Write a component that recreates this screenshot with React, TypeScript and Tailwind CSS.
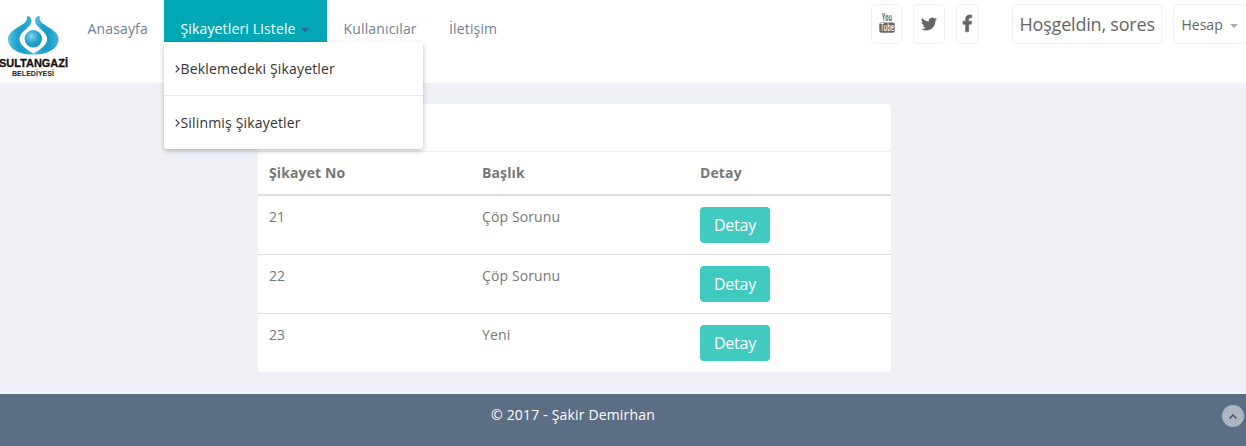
import React from "react";

const rows = [
  { no: 21, title: "Çöp Sorunu" },
  { no: 22, title: "Çöp Sorunu" },
  { no: 23, title: "Yeni" },
];

function Logo() {
  return (
    <svg className="mt-[10px] block h-[70px] w-[72px] shrink-0" viewBox="0 0 72 70">
      <defs>
        <linearGradient id="wing" x1="0" x2="1" y1="0" y2="0">
          <stop offset="0" stopColor="#5fc4e3" />
          <stop offset="0.4" stopColor="#1a9fcb" />
          <stop offset="0.6" stopColor="#1a9fcb" />
          <stop offset="1" stopColor="#3fb4d9" />
        </linearGradient>
        <radialGradient id="orb" cx="0.4" cy="0.35" r="0.65">
          <stop offset="0" stopColor="#86d5ec" />
          <stop offset="0.6" stopColor="#25a5cf" />
          <stop offset="1" stopColor="#1291bf" />
        </radialGradient>
      </defs>
      <g fill="url(#wing)">
        <path d="M26.800 6.300C29.500 5.600 31.800 8 31.500 11.500C31 18 19.500 21 19.500 29C19.500 35 26.500 39.500 33.300 43.600V44.500C20 45 8 39 8 29C8 18 30 15.500 26.800 6.300Z" />
        <path d="M39.800 6.300C37.100 5.600 34.800 8 35.100 11.500C35.600 18 47.100 21 47.100 29C47.100 35 40.100 39.500 33.300 43.600V44.500C46.600 45 58.600 39 58.600 29C58.600 18 36.600 15.500 39.800 6.300Z" />
      </g>
      <circle cx="33.300" cy="28.800" r="8.700" fill="url(#orb)" />
      <text x="-1" y="56.500" textLength="69" lengthAdjust="spacingAndGlyphs" fill="#111" stroke="#111" strokeWidth="0.300" fontFamily="Liberation Sans, sans-serif" fontWeight="700" fontSize="11">SULTANGAZİ</text>
      <text x="12" y="65.500" textLength="42" lengthAdjust="spacingAndGlyphs" fill="#222" fontFamily="Liberation Sans, sans-serif" fontWeight="700" fontSize="7.500">BELEDİYESİ</text>
    </svg>
  );
}

function YoutubeIcon() {
  return (
    <svg className="-mt-[2px] h-[20px] w-[16px] overflow-visible" viewBox="0 0 16 20">
      <g transform="scale(0.52 1)" fontFamily="Open Sans, sans-serif" fontWeight="700" fontSize="10">
        <text x="5.800" y="8.300" fill="#666">You</text>
      </g>
      <rect x="0.300" y="9.400" width="15.400" height="10.400" rx="2" fill="#666" />
      <g transform="scale(0.56 1)" fontFamily="Open Sans, sans-serif" fontWeight="600" fontSize="10">
        <text x="2.600" y="18.300" fill="#fff">Tube</text>
      </g>
    </svg>
  );
}

function TwitterIcon() {
  return (
    <svg className="-mt-px h-[16px] w-[16px]" viewBox="0 0 24 24" fill="#666">
      <path d="M23.950 4.570a10 10 0 0 1-2.820.77 4.960 4.960 0 0 0 2.160-2.720c-.95.55-2 .95-3.130 1.180a4.920 4.920 0 0 0-8.380 4.480C7.690 8.090 4.070 6.130 1.640 3.160a4.920 4.920 0 0 0 1.520 6.570 4.900 4.900 0 0 1-2.230-.61v.06a4.920 4.920 0 0 0 3.950 4.830 5 5 0 0 1-2.210.08 4.940 4.940 0 0 0 4.600 3.420A9.870 9.870 0 0 1 0 19.540a13.990 13.990 0 0 0 7.550 2.210c9.050 0 14-7.500 14-13.980 0-.21 0-.42-.02-.63a9.940 9.940 0 0 0 2.420-2.570z" />
    </svg>
  );
}

function FacebookIcon() {
  return (
    <svg className="-mt-[2px] h-[17px] w-[9px] overflow-visible" viewBox="0 0 9 17" fill="#666" stroke="#666" strokeWidth="0.600">
      <path d="M8.800 0.150V2.800H7.200C6 2.800 5.700 3.400 5.700 4.300V6.200H8.700L8.300 9.200H5.700V16.800H2.600V9.200H0V6.200H2.600V4C2.600 1.400 4.200 0 6.500 0C7.600 0 8.500 0.080 8.800 0.150Z" />
    </svg>
  );
}

function Chevron() {
  return (
    <svg className="mr-[0.5px] h-[8px] w-[5px] shrink-0" viewBox="0 0 5 8" fill="none" stroke="#333" strokeWidth="1.100">
      <path d="M0.700 0.700L4 4L0.700 7.300" />
    </svg>
  );
}

function Caret({ className }: { className: string }) {
  return (
    <svg className={className} viewBox="0 0 8 4" fill="currentColor">
      <path d="M0 0H8L4 4Z" />
    </svg>
  );
}

const box = "flex h-[40px] items-center rounded border border-[#f0f1f7] text-[#666]";

export default function App() {
  return (
    <div className="flex h-[446px] w-[1246px] flex-col overflow-hidden bg-[#f0f1f7] font-['Open_Sans',sans-serif] text-[14px] leading-5 text-[#777]">
      <header className="flex h-[83px] shrink-0 items-start bg-white">
        <Logo />
        <nav className="-ml-px flex tracking-[0.15px] text-[#708096]">
          <a className="flex h-[42px] w-[93px] items-end pb-[3px] pl-[16.5px]">Anasayfa</a>
          <div className="relative">
            <a className="flex h-[42px] w-[163px] items-end bg-[#00a8b5] pb-[3px] pl-[16.5px] text-white">
              Şikayetleri Listele
              <Caret className="mb-[7px] ml-[5.5px] h-[4px] w-[8px] text-[#2f6398]" />
            </a>
            <div className="absolute top-[42px] left-0 z-10 w-[259px] rounded-b-[3px] bg-white tracking-[0.17px] text-[#333] shadow-[0_2px_5px_rgba(0,0,0,0.26)]">
              <a className="flex h-[54px] items-center border-b border-[#e7e7e7] pl-[11px]">
                <Chevron />
                Beklemedeki Şikayetler
              </a>
              <a className="flex h-[53px] items-center pt-px pl-[11px]">
                <Chevron />
                Silinmiş Şikayetler
              </a>
            </div>
          </div>
          <a className="flex h-[42px] w-[106px] items-end pb-[3px] pl-[16.5px]">Kullanıcılar</a>
          <a className="flex h-[42px] items-end pb-[3px] pl-[16px]">İletişim</a>
        </nav>
        <div className="mt-[4px] -mr-px ml-auto flex">
          <a className={`${box} w-[31px] justify-center`}><YoutubeIcon /></a>
          <a className={`${box} ml-[11px] w-[32px] justify-center`}><TwitterIcon /></a>
          <a className={`${box} ml-[11px] w-[23px] justify-center`}><FacebookIcon /></a>
          <div className={`${box} ml-[33px] w-[150px] pl-[6.5px] text-[18px] tracking-[-0.2px] whitespace-nowrap`}>Hoşgeldin, sores</div>
          <a className={`${box} ml-[11px] w-[74px] pt-px pl-[7.5px]`}>
            Hesap
            <Caret className="mt-[2px] ml-[7.5px] h-[4px] w-[8px] text-[#a7abc3]" />
          </a>
        </div>
      </header>

      <main className="mt-[21px] ml-[258px] w-[633px] shrink-0 overflow-hidden rounded-[4px] bg-white tracking-[0.12px]">
        <div className="h-[48px] border-b border-[#f0f1f7]" />
        <div className="grid h-[44px] grid-cols-[213px_218px_202px] border-b-2 border-[#ddd] pt-[11px] font-bold">
          <span className="pl-[11px]">Şikayet No</span>
          <span className="pl-[11px]">Başlık</span>
          <span className="pl-[11px]">Detay</span>
        </div>
        <div className="divide-y divide-[#ddd]">
          {rows.map((row) => (
            <div key={row.no} className="grid grid-cols-[213px_218px_202px] py-[11px]">
              <span className="pl-[11px]">{row.no}</span>
              <span className="pl-[11px]">{row.title}</span>
              <div className="pl-[11px]">
                <button className="block h-[36px] w-[70px] rounded-[4px] bg-[#41cac0] text-[16px] tracking-[-0.2px] text-white">Detay</button>
              </div>
            </div>
          ))}
        </div>
      </main>

      <footer className="mt-[22px] flex h-[52px] shrink-0 items-start bg-[#5b6e84] pt-[11px] text-white">
        <span className="w-[1146px] text-center tracking-[0.17px]">© 2017 - Şakir Demirhan</span>
        <a className="ml-[76px] flex size-[22px] shrink-0 items-center justify-center rounded-full bg-[#acb6c1]">
          <svg className="h-[5px] w-[8px]" viewBox="0 0 8 5" fill="none" stroke="#3c4658" strokeWidth="1.300">
            <path d="M0.600 4.500L4 1L7.400 4.500" />
          </svg>
        </a>
      </footer>
    </div>
  );
}
